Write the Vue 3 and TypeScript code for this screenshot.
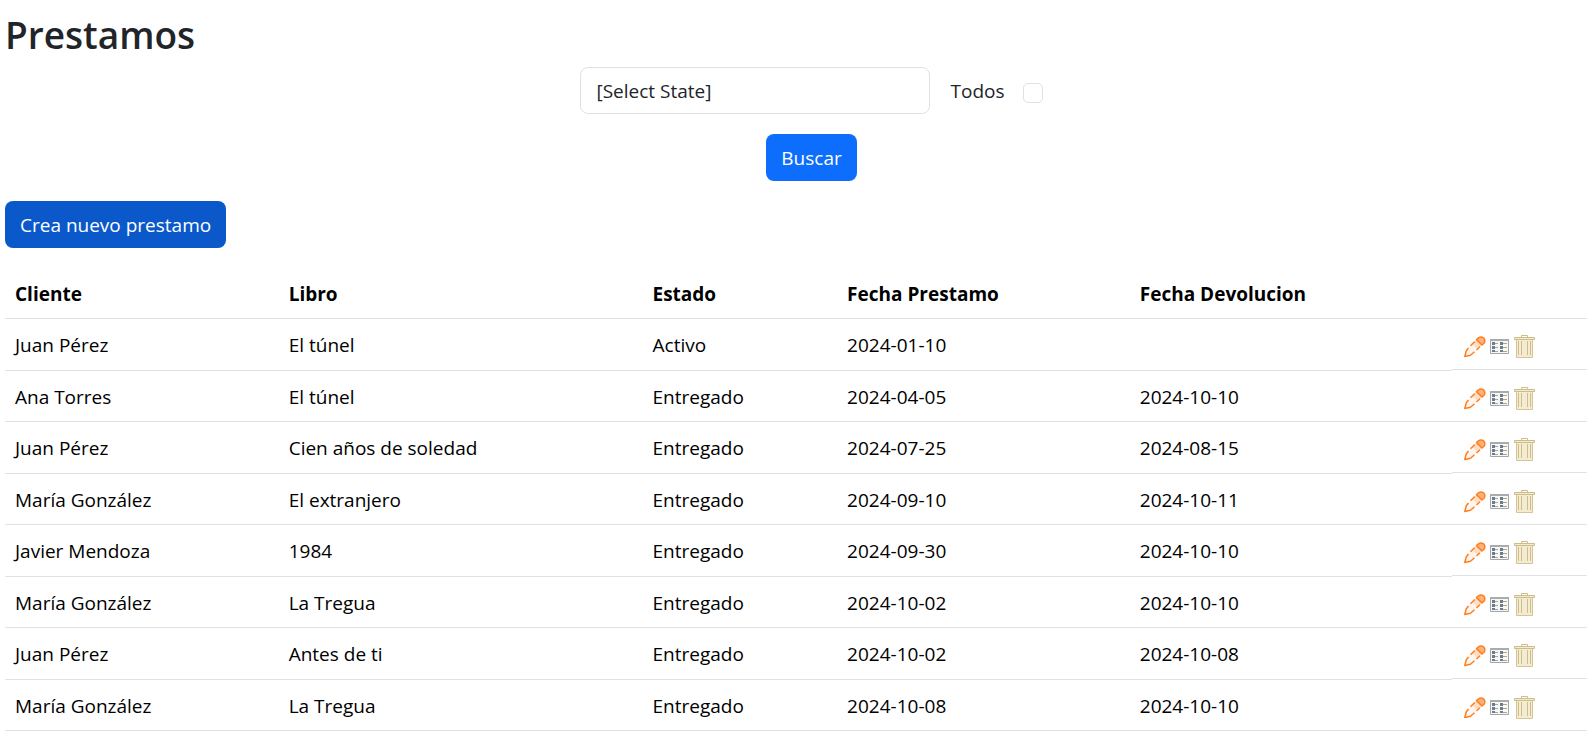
<script setup lang="ts">
import { ref } from 'vue'

interface Prestamo {
  id: number
  cliente: string
  libro: string
  estado: string
  fechaPrestamo: string
  fechaDevolucion: string
}

const estado = ref('')
const todos = ref(false)

const prestamos: Prestamo[] = [
  { id: 1, cliente: 'Juan Pérez', libro: 'El túnel', estado: 'Activo', fechaPrestamo: '2024-01-10', fechaDevolucion: '' },
  { id: 2, cliente: 'Ana Torres', libro: 'El túnel', estado: 'Entregado', fechaPrestamo: '2024-04-05', fechaDevolucion: '2024-10-10' },
  { id: 3, cliente: 'Juan Pérez', libro: 'Cien años de soledad', estado: 'Entregado', fechaPrestamo: '2024-07-25', fechaDevolucion: '2024-08-15' },
  { id: 4, cliente: 'María González', libro: 'El extranjero', estado: 'Entregado', fechaPrestamo: '2024-09-10', fechaDevolucion: '2024-10-11' },
  { id: 5, cliente: 'Javier Mendoza', libro: '1984', estado: 'Entregado', fechaPrestamo: '2024-09-30', fechaDevolucion: '2024-10-10' },
  { id: 6, cliente: 'María González', libro: 'La Tregua', estado: 'Entregado', fechaPrestamo: '2024-10-02', fechaDevolucion: '2024-10-10' },
  { id: 7, cliente: 'Juan Pérez', libro: 'Antes de ti', estado: 'Entregado', fechaPrestamo: '2024-10-02', fechaDevolucion: '2024-10-08' },
  { id: 8, cliente: 'María González', libro: 'La Tregua', estado: 'Entregado', fechaPrestamo: '2024-10-08', fechaDevolucion: '2024-10-10' },
]
</script>

<template>
  <main class="page">
    <h1>Prestamos</h1>

    <form class="filters" @submit.prevent>
      <div class="filter-row">
        <select v-model="estado" class="state" aria-label="Estado">
          <option value="">[Select State]</option>
          <option value="activo">Activo</option>
          <option value="entregado">Entregado</option>
        </select>
        <label for="todos">Todos</label>
        <input id="todos" v-model="todos" class="check" type="checkbox" />
      </div>
      <button class="btn" type="submit">Buscar</button>
    </form>

    <a class="btn btn-dark" href="#nuevo">Crea nuevo prestamo</a>

    <table>
      <colgroup>
        <col class="c-cliente" />
        <col class="c-libro" />
        <col class="c-estado" />
        <col class="c-prestamo" />
        <col class="c-devolucion" />
        <col />
      </colgroup>
      <thead>
        <tr>
          <th scope="col">Cliente</th>
          <th scope="col">Libro</th>
          <th scope="col">Estado</th>
          <th scope="col">Fecha Prestamo</th>
          <th scope="col">Fecha Devolucion</th>
          <td></td>
        </tr>
      </thead>
      <tbody>
        <tr v-for="p in prestamos" :key="p.id">
          <td>{{ p.cliente }}</td>
          <td>{{ p.libro }}</td>
          <td>{{ p.estado }}</td>
          <td>{{ p.fechaPrestamo }}</td>
          <td>{{ p.fechaDevolucion }}</td>
          <td class="actions-cell">
            <div class="actions">
              <a :href="'#editar-' + p.id" aria-label="Editar">
                <svg viewBox="0 0 24 24" aria-hidden="true">
                  <path d="M2.800 21.500 4.200 15.500 14.500 4.800 20 10 8.800 20.300Z" fill="#fff5ee" />
                  <path d="M10.500 9 14.500 4.800 20 10 15.500 14Z" fill="#ffdcc2" />
                  <path d="M14.500 4.600 16.500 2.800Q19 1 21.800 3Q23.800 5.800 22 8.200L20 10Z" fill="#ffb27d" />
                  <path d="M6.500 13 4.200 16 2.800 21.500 8.500 20.300 12.500 16.800M14.500 15 18 11.800M8.500 10.800 12.800 6.500M14.500 4.600 16.500 2.800Q19 1 21.800 3Q23.800 5.800 22 8.200L20 10Z" fill="none" stroke="#ff7f1f" stroke-width="1.500" stroke-linejoin="round" />
                </svg>
              </a>
              <a :href="'#detalle-' + p.id" aria-label="Detalle">
                <svg viewBox="0 0 24 24" aria-hidden="true">
                  <path d="M3.500 4.500h18v14h-18z" fill="#f8f8ee" stroke="#a3a6a8" />
                  <path d="M3 4h19v2H3z" fill="#a9acac" />
                  <path d="M5 7h3v3H5zM13 7h3v3h-3zM5 11h3v3H5zM13 11h3v3h-3zM5 15h3v2H5zM13 15h3v2h-3z" fill="#6b7c98" />
                  <path d="M8 8.500h3M16 8.500h4M8 12.500h3M16 12.500h4M8 16.500h3M16 16.500h4" stroke="#a4a7a5" />
                </svg>
              </a>
              <a :href="'#eliminar-' + p.id" aria-label="Eliminar">
                <svg viewBox="0 0 24 24" aria-hidden="true">
                  <path d="M4.500 4h16v18.500h-16z" fill="#f3ecd2" stroke="#d5c594" />
                  <path d="M2.500 2.500h20v2h-20z" fill="#f3ecd2" stroke="#cdbb88" />
                  <path d="M9.500 2V.5h6V2M6.500 6v14M9.500 6v14M15.500 6v14M18.500 6v14" fill="none" stroke="#cfbd8a" />
                </svg>
              </a>
            </div>
          </td>
        </tr>
      </tbody>
    </table>
  </main>
</template>

<style>
body {
  margin: 0;
  background: #fff;
}
</style>

<style scoped>
.page {
  padding: 10px 0 8px 5px;
  color: #212529;
  font: 19px/30px "Segoe UI", "Open Sans", "Noto Sans", sans-serif;
}

h1 {
  margin: 0 0 7px;
  font-size: 37px;
  font-weight: 600;
  line-height: 50px;
}

.filters {
  display: flex;
  flex-direction: column;
  align-items: center;
  gap: 20px;
  margin-bottom: 20px;
  padding-left: 31px;
}

.filter-row {
  display: flex;
  align-items: center;
  gap: 20px;
}

.state {
  box-sizing: border-box;
  width: 350px;
  height: 47px;
  padding: 0 15px;
  appearance: none;
  border: 1px solid #dee2e6;
  border-radius: 8px;
  background: #fff;
  color: inherit;
  font: inherit;
}

.check {
  width: 20px;
  height: 20px;
  margin: 4px 0 0 -2px;
  appearance: none;
  border: 1px solid #dee2e6;
  border-radius: 5px;
  box-sizing: border-box;
}

.check:checked {
  background: #0d6efd;
}

.btn {
  display: inline-block;
  box-sizing: border-box;
  height: 47px;
  padding: 1px 15px 0;
  border: 0;
  border-radius: 8px;
  background: #0d6efd;
  color: #fff;
  font: inherit;
  line-height: 46px;
  text-decoration: none;
}

.btn-dark {
  background: #0a58ca;
}

table {
  width: 100%;
  margin-top: 20px;
  border-collapse: separate;
  border-spacing: 0;
  table-layout: fixed;
  color: #000;
}

.c-cliente { width: 17.3%; }
.c-libro { width: 23%; }
.c-estado { width: 12.3%; }
.c-prestamo { width: 18.5%; }
.c-devolucion { width: 20.4%; }

th,
td {
  box-sizing: border-box;
  height: 51px;
  padding: 1px 10px 0;
  border-bottom: 1px solid #dee2e6;
  text-align: left;
}

tbody tr:nth-child(odd) td {
  height: 52px;
}

tbody tr:nth-child(odd) .actions-cell {
  border-bottom-color: #fff;
  box-shadow: inset 0 -1px #dee2e6;
}

.actions-cell {
  padding-top: 5px;
}

.actions {
  display: flex;
  gap: 1px;
}

.actions a,
.actions svg {
  display: block;
  width: 24px;
  height: 24px;
}
</style>
